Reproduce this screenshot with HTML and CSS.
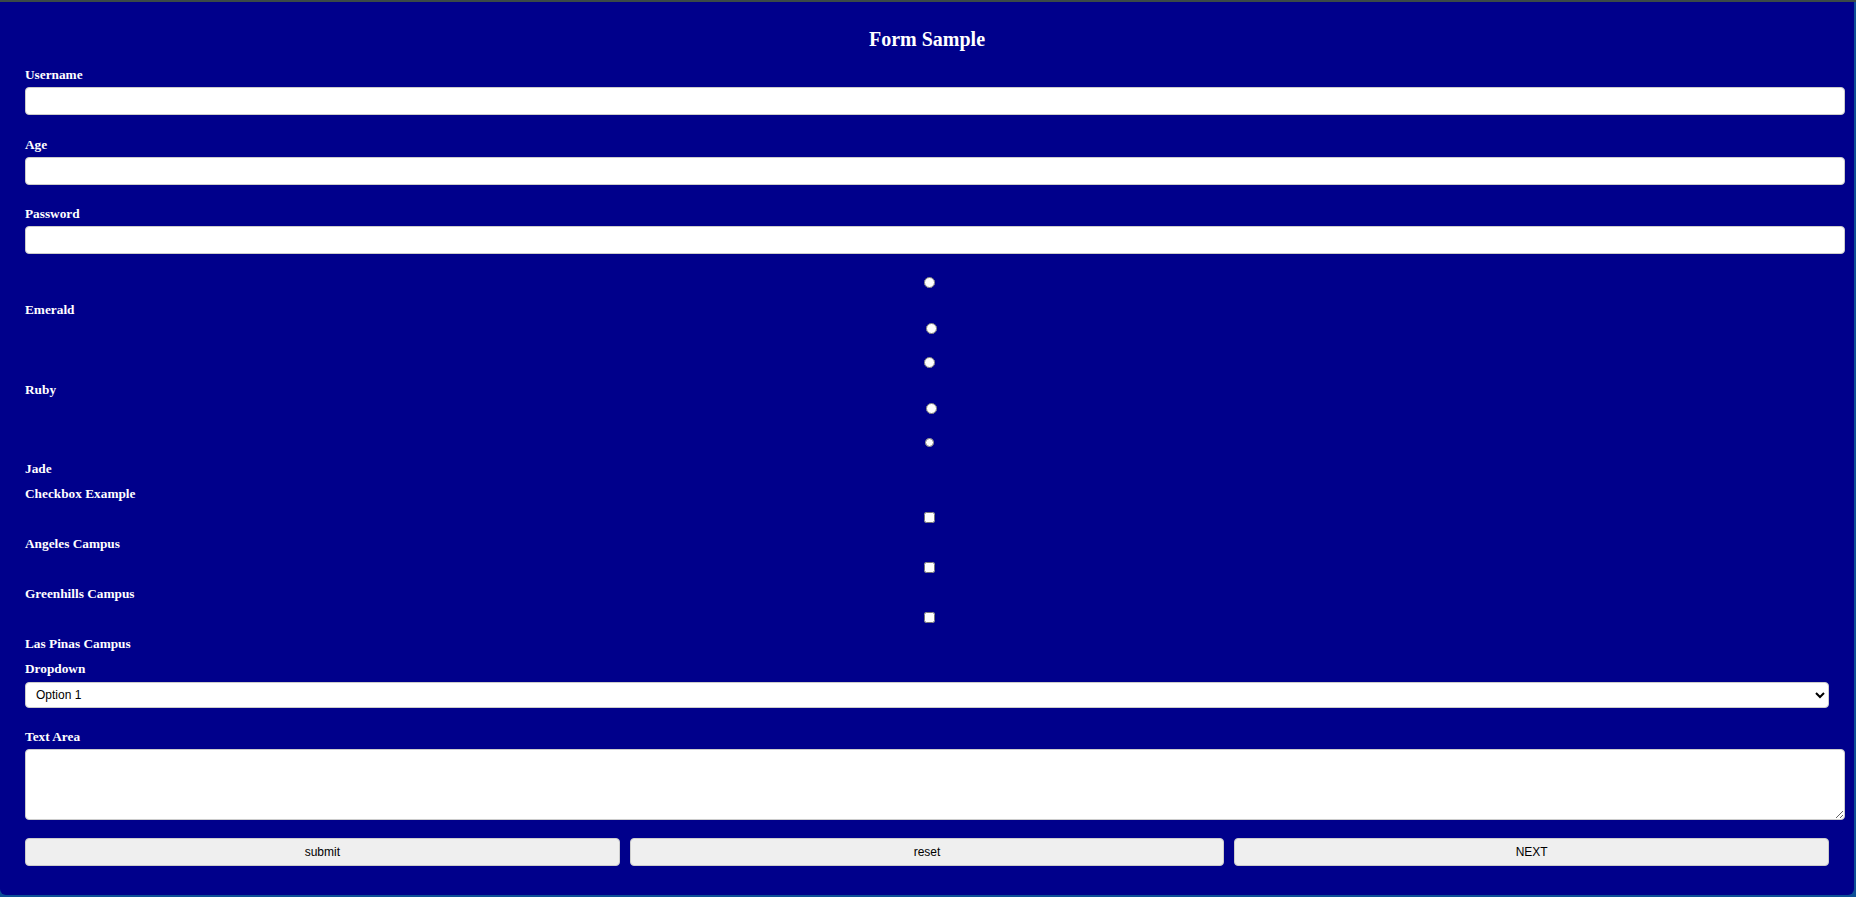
FILE: index.html
```html
<!DOCTYPE html>
<html lang="en">
<head>
    <meta charset="UTF-8">
    <meta name="viewport" content="width=device-width, initial-scale=1.0">
    <title>Form Sample</title>
    <link rel="stylesheet" href="styles.css">
</head>
<body>
    <form class="form-card">
        <h2>Form Sample</h2>

        <label class="field-label first" for="username">Username</label>
        <input class="text-input" type="text" id="username">

        <label class="field-label" for="age">Age</label>
        <input class="text-input" type="number" id="age">

        <label class="field-label tight" for="password">Password</label>
        <input class="text-input" type="password" id="password">

        <!-- gem radios -->
        <input class="radio radio-top" type="radio" name="gem" value="emerald">
        <label class="option-label">Emerald</label>
        <input class="radio radio-bottom" type="radio" name="gem" value="emerald">

        <input class="radio radio-top" type="radio" name="gem" value="ruby">
        <label class="option-label">Ruby</label>
        <input class="radio radio-bottom" type="radio" name="gem" value="ruby">

        <input class="radio radio-top small" type="radio" name="gem" value="jade">
        <label class="option-label">Jade</label>

        <label class="group-label">Checkbox Example</label>

        <input class="check" type="checkbox" value="angeles">
        <label class="check-label">Angeles Campus</label>

        <input class="check" type="checkbox" value="greenhills">
        <label class="check-label">Greenhills Campus</label>

        <input class="check" type="checkbox" value="laspinas">
        <label class="check-label">Las Pinas Campus</label>

        <label class="group-label" for="dropdown">Dropdown</label>
        <select id="dropdown">
            <option>Option 1</option>
            <option>Option 2</option>
            <option>Option 3</option>
        </select>

        <label class="field-label area-label" for="textarea">Text Area</label>
        <textarea id="textarea"></textarea>

        <div class="buttons">
            <button type="submit">submit</button>
            <button type="reset">reset</button>
            <button type="button">NEXT</button>
        </div>
    </form>
</body>
</html>
```

FILE: styles.css
```css
body {
    margin: 0;
    padding: 0 2px 2px 0;
    border-top: 2px solid #3b4a47;
    background: #0d4f96;
    font-family: 'Liberation Serif', 'Times New Roman', serif;
}
.form-card {
    background-color: #00008b;
    border-radius: 0 0 6px 6px;
    padding: 25px 25px 30px 25px;
    height: 838px;
    color: white;
}
h2 {
    margin: 0;
    font-size: 20px;
    line-height: 24px;
    text-align: center;
}
label {
    display: block;
    font-size: 13.3px;
    font-weight: bold;
    line-height: 16px;
}
.field-label {
    margin-top: 22px;
}
.field-label.first {
    margin-top: 16px;
}
.field-label.tight {
    margin-top: 21px;
}
.area-label {
    margin-top: 21px;
}
.text-input, textarea {
    display: block;
    width: 100%;
    height: 14px;
    margin: 4px 0 0 0;
    padding: 6px 7px;
    border: 1px solid #ccc;
    border-radius: 4px;
    background: white;
    font-family: 'Liberation Sans', Arial, sans-serif;
    font-size: 12px;
}
textarea {
    height: 57px;
    resize: both;
}
.radio, .check {
    display: block;
    width: 11px;
    height: 11px;
    margin: 0;
}
.radio-top {
    margin-top: 23px;
    margin-left: calc(50% - 3.5px);
}
.radio-top.small {
    width: 9px;
    height: 9px;
    margin-top: 24px;
    margin-left: calc(50% - 2.5px);
}
.radio-bottom {
    margin-top: 5px;
    margin-left: calc(50% - 1.5px);
}
.option-label {
    margin-top: 14px;
}
.group-label {
    margin-top: 9px;
}
.check {
    margin-top: 10px;
    margin-left: calc(50% - 3.5px);
}
.check-label {
    margin-top: 13px;
}
select {
    display: block;
    width: 100%;
    height: 26px;
    margin-top: 5px;
    padding: 0 6px;
    border: 1px solid #ccc;
    border-radius: 4px;
    background: white;
    color: black;
    font-family: 'Liberation Sans', Arial, sans-serif;
    font-size: 12px;
}
.buttons {
    display: flex;
    gap: 10px;
    margin-top: 18px;
}
.buttons button {
    flex: 1;
    height: 28px;
    border: 1px solid #ccc;
    border-radius: 4px;
    background-color: #efefef;
    color: black;
    font-family: 'Liberation Sans', Arial, sans-serif;
    font-size: 12px;
    cursor: pointer;
}
```
